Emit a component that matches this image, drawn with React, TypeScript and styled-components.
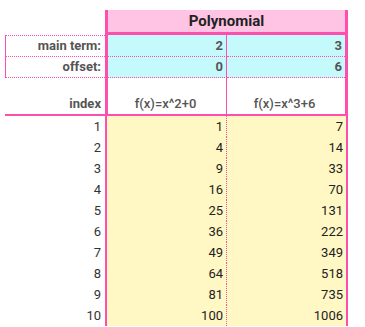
import { createGlobalStyle, styled } from "styled-components";

const PINK = "#ff4fae";

const GlobalStyle = createGlobalStyle`
  body {
    margin: 0;
    background: #ffffff;
    font-family: Roboto, "Liberation Sans", sans-serif;
  }
`;

const Sheet = styled.div`
  padding: 10px 0 0 5px;
  width: 343px;
`;

const Row = styled.div<{ $h: number }>`
  display: flex;
  height: ${(p) => p.$h}px;
`;

const LabelCell = styled.div<{ $top?: boolean; $boxed?: boolean; $bottom?: string }>`
  box-sizing: border-box;
  width: 100px;
  display: flex;
  align-items: flex-end;
  justify-content: flex-end;
  padding: 0 4px 3px 0;
  font-size: 13px;
  color: #333;
  border-left: ${(p) => (p.$boxed ? `1px solid ${PINK}` : "none")};
  border-top: ${(p) => (p.$top ? `1px dotted ${PINK}` : "none")};
  border-bottom: ${(p) => p.$bottom ?? "none"};
`;

const Label = styled.span<{ $bold?: boolean }>`
  font-weight: ${(p) => (p.$bold ? 700 : 400)};
  color: ${(p) => (p.$bold ? "#555" : "#333")};
`;

const Group = styled.div<{ $edge: number; $bottom?: string }>`
  box-sizing: border-box;
  width: 243px;
  display: flex;
  border-left: ${(p) => p.$edge}px solid ${PINK};
  border-right: ${(p) => p.$edge}px solid ${PINK};
  border-bottom: ${(p) => p.$bottom ?? "none"};
`;

const Title = styled.div`
  flex: 1;
  background: #ffc4e4;
  border-bottom: 3px solid ${PINK};
  display: flex;
  align-items: center;
  justify-content: center;
  font-size: 15px;
  font-weight: 700;
  color: #222;
`;

const Cell = styled.div<{ $bg?: string; $divider?: string; $center?: boolean; $bottom?: string }>`
  box-sizing: border-box;
  flex: 1;
  display: flex;
  align-items: flex-end;
  justify-content: ${(p) => (p.$center ? "center" : "flex-end")};
  padding: 0 3px 3px 0;
  background: ${(p) => p.$bg ?? "transparent"};
  border-right: ${(p) => p.$divider ?? "none"};
  border-bottom: ${(p) => p.$bottom ?? "none"};
  font-size: 13px;
  color: #222;
`;

const Value = styled.span<{ $weight?: number }>`
  font-weight: ${(p) => p.$weight ?? 400};
  color: ${(p) => (p.$weight ? "#555" : "#222")};
`;

const params = [
  { label: "main term:", a: 2, b: 3 },
  { label: "offset:", a: 0, b: 6 },
];

const indices = [1, 2, 3, 4, 5, 6, 7, 8, 9, 10];

export default function App() {
  return (
    <>
      <GlobalStyle />
      <Sheet>
        <Row $h={25}>
          <LabelCell />
          <Group $edge={3}>
            <Title>Polynomial</Title>
          </Group>
        </Row>
        {params.map((p, i) => (
          <Row key={p.label} $h={i === 0 ? 22 : 21}>
            <LabelCell $boxed $top={i === 0} $bottom={`1px dotted ${PINK}`}>
              <Label $bold>{p.label}</Label>
            </LabelCell>
            <Group $edge={3}>
              <Cell $bg="#c4fafc" $divider={`1px solid ${PINK}`} $bottom={`1px dotted ${PINK}`}>
                <Value $weight={700}>{p.a}</Value>
              </Cell>
              <Cell $bg="#c4fafc" $bottom={`1px dotted ${PINK}`}>
                <Value $weight={700}>{p.b}</Value>
              </Cell>
            </Group>
          </Row>
        ))}
        <Row $h={38}>
          <LabelCell $bottom={`2px solid ${PINK}`}>
            <Label $bold>index</Label>
          </LabelCell>
          <Group $edge={3} $bottom={`2px solid ${PINK}`}>
            <Cell $center $divider={`1px solid ${PINK}`}>
              <Value $weight={500}>f(x)=x^2+0</Value>
            </Cell>
            <Cell $center>
              <Value $weight={500}>f(x)=x^3+6</Value>
            </Cell>
          </Group>
        </Row>
        {indices.map((n) => (
          <Row key={n} $h={21}>
            <LabelCell>
              <Label>{n}</Label>
            </LabelCell>
            <Group $edge={2}>
              <Cell $bg="#fff7c4" $divider={`1px dotted ${PINK}`}>
                <Value>{n * n}</Value>
              </Cell>
              <Cell $bg="#fff7c4">
                <Value>{n * n * n + 6}</Value>
              </Cell>
            </Group>
          </Row>
        ))}
      </Sheet>
    </>
  );
}
